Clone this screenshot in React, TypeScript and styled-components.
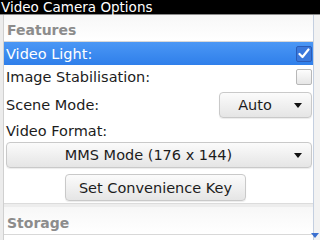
import React from "react";
import styled, { createGlobalStyle } from "styled-components";

const Global = createGlobalStyle`
  html, body { margin: 0; padding: 0; background: #ececec; }
  body { width: 320px; height: 240px; overflow: hidden; font-family: "DejaVu Sans", "Liberation Sans", sans-serif; }
`;

const Screen = styled.div`
  width: 320px;
  height: 240px;
  display: flex;
  flex-direction: column;
  overflow: hidden;
`;

const TitleBar = styled.div`
  flex: none;
  height: 14px;
  background: #000;
  color: #fff;
  font-size: 13.5px;
  line-height: 14px;
  padding-left: 1px;
  white-space: nowrap;
  border-bottom: 1px solid #8a8a8a;
`;

const Body = styled.div`
  flex: 1;
  display: flex;
  min-height: 0;
`;

const LeftGutter = styled.div`
  width: 3px;
  background: #ececec;
  border-right: 1px solid #d0d0d0;
`;

const Content = styled.div`
  flex: 1;
  background: #fff;
  display: flex;
  flex-direction: column;
  overflow: hidden;
  & > * { flex-shrink: 0; }
`;

const ScrollTrack = styled.div`
  width: 6px;
  position: relative;
  background: #f2f2f2;
  border-left: 1px solid #c4cfe0;
`;

const ScrollArrow = styled.div`
  position: absolute;
  right: 1px;
  bottom: 2px;
  width: 0;
  height: 0;
  border-left: 4px solid transparent;
  border-right: 4px solid transparent;
  border-top: 5px solid #3a6fd0;
`;

const SectionHeader = styled.div<{ $h: number }>`
  box-sizing: border-box;
  height: ${(p) => p.$h}px;
  display: flex;
  align-items: center;
  padding: 4px 0 0 3px;
  font-size: 14px;
  font-weight: bold;
  color: #8c8c8c;
  background: linear-gradient(#f7f7f7, #ffffff);
  border-bottom: 1px solid #d8d8d8;
`;

const Row = styled.div<{ $h: number; $selected?: boolean }>`
  height: ${(p) => p.$h}px;
  display: flex;
  align-items: center;
  justify-content: space-between;
  padding: 0 1px 0 2px;
  font-size: 14.5px;
  color: ${(p) => (p.$selected ? "#fff" : "#1c1c1c")};
  background: ${(p) => (p.$selected ? "linear-gradient(#4b97f5, #2f7fea)" : "transparent")};
  white-space: nowrap;
`;

const CheckBox = styled.div<{ $checked?: boolean }>`
  width: 14px;
  height: 14px;
  border-radius: 2px;
  border: 1px solid ${(p) => (p.$checked ? "#2a5cb8" : "#b8b8b8")};
  background: ${(p) => (p.$checked ? "#3a78dc" : "linear-gradient(#fdfdfd, #e6e6e6)")};
  display: flex;
  align-items: center;
  justify-content: center;
`;

const DropDown = styled.div<{ $w?: number }>`
  box-sizing: border-box;
  height: 26px;
  width: ${(p) => (p.$w ? `${p.$w}px` : "auto")};
  flex: ${(p) => (p.$w ? "none" : "1")};
  border: 1px solid #c9c9c9;
  border-radius: 4px;
  background: linear-gradient(#fbfbfb, #e5e5e5);
  box-shadow: 0 1px 1px rgba(0, 0, 0, 0.08);
  display: flex;
  align-items: center;
  font-size: 14.5px;
  color: #1c1c1c;
`;

const DropLabel = styled.span`
  flex: 1;
  text-align: center;
`;

const Caret = styled.span`
  width: 0;
  height: 0;
  margin: 0 9px 0 4px;
  border-left: 4px solid transparent;
  border-right: 4px solid transparent;
  border-top: 5px solid #111;
`;

const FullRow = styled.div<{ $h: number }>`
  height: ${(p) => p.$h}px;
  display: flex;
  align-items: center;
  padding: 0 1px 0 2px;
`;

const CenterRow = styled.div<{ $h: number }>`
  box-sizing: border-box;
  height: ${(p) => p.$h}px;
  display: flex;
  align-items: flex-start;
  justify-content: center;
  padding: 5px 6px 0 0;
`;

const Button = styled.div`
  box-sizing: border-box;
  height: 27px;
  width: 181px;
  border: 1px solid #c9c9c9;
  border-radius: 4px;
  background: linear-gradient(#fbfbfb, #e5e5e5);
  box-shadow: 0 1px 1px rgba(0, 0, 0, 0.08);
  display: flex;
  align-items: center;
  justify-content: center;
  font-size: 14.5px;
  color: #1c1c1c;
`;

const Separator = styled.div`
  height: 3px;
  background: #ededed;
  border-top: 1px solid #dcdcdc;
`;

const Check = () => (
  <svg width="12" height="11" viewBox="0 0 12 11">
    <path d="M1.5 6 L4.5 9 L10.5 1.5" fill="none" stroke="#fff" strokeWidth="2.2" strokeLinecap="round" strokeLinejoin="round" />
  </svg>
);

export default function App() {
  return (
    <>
      <Global />
      <Screen>
        <TitleBar>Video Camera Options</TitleBar>
        <Body>
          <LeftGutter />
          <Content>
            <SectionHeader $h={27}>Features</SectionHeader>
            <Row $h={23} $selected>
              <span>Video Light:</span>
              <CheckBox $checked>
                <Check />
              </CheckBox>
            </Row>
            <Row $h={24}>
              <span>Image Stabilisation:</span>
              <CheckBox />
            </Row>
            <Row $h={32}>
              <span>Scene Mode:</span>
              <DropDown $w={93}>
                <DropLabel>Auto</DropLabel>
                <Caret />
              </DropDown>
            </Row>
            <Row $h={20}>
              <span>Video Format:</span>
            </Row>
            <FullRow $h={28}>
              <DropDown>
                <DropLabel>MMS Mode (176 x 144)</DropLabel>
                <Caret />
              </DropDown>
            </FullRow>
            <CenterRow $h={34}>
              <Button>Set Convenience Key</Button>
            </CenterRow>
            <Separator />
            <SectionHeader $h={28}>Storage</SectionHeader>
            <Row $h={22}>
              <span>Folder:</span>
            </Row>
          </Content>
          <ScrollTrack>
            <ScrollArrow />
          </ScrollTrack>
        </Body>
      </Screen>
    </>
  );
}
